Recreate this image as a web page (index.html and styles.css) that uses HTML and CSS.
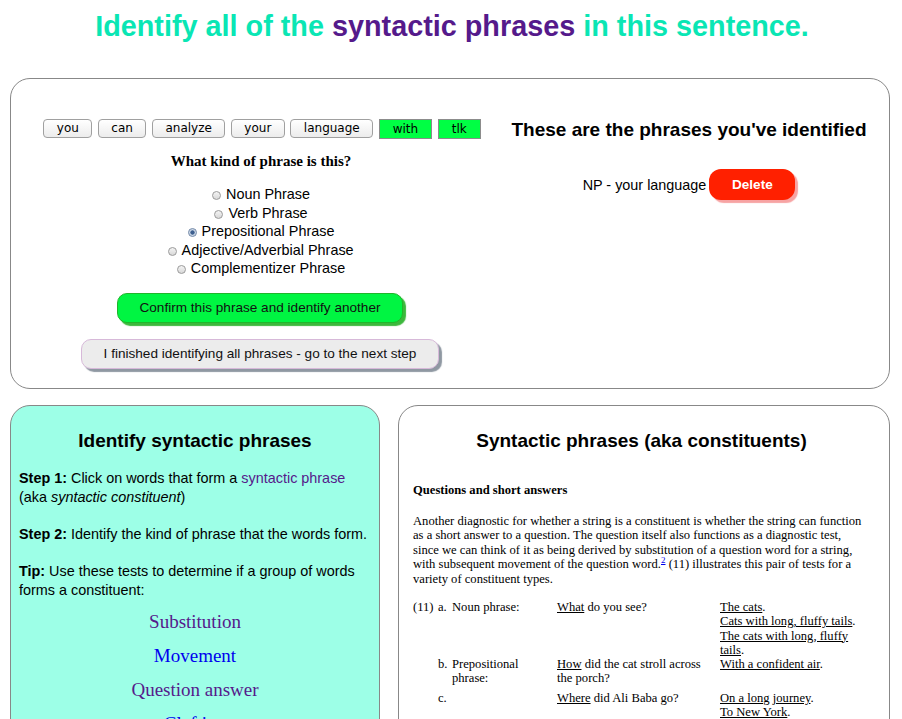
FILE: index.html
```html
<!DOCTYPE html>
<html>
<head>
<meta charset="utf-8">
<link rel="stylesheet" href="styles.css">
</head>
<body>
<div class="page">
  <h1 class="title">Identify all of the <span class="purple">syntactic phrases</span> in this sentence.</h1>

  <section class="top-panel">
    <div class="left-col">
      <div class="words">
        <button class="word">you</button>
        <button class="word">can</button>
        <button class="word">analyze</button>
        <button class="word">your</button>
        <button class="word">language</button>
        <button class="word selected">with</button>
        <button class="word selected">tlk</button>
      </div>
      <h4 class="question">What kind of phrase is this?</h4>
      <div class="radios">
        <label class="radio-line"><input type="radio" name="k"> Noun Phrase</label>
        <label class="radio-line"><input type="radio" name="k"> Verb Phrase</label>
        <label class="radio-line"><input type="radio" name="k" checked> Prepositional Phrase</label>
        <label class="radio-line"><input type="radio" name="k"> Adjective/Adverbial Phrase</label>
        <label class="radio-line"><input type="radio" name="k"> Complementizer Phrase</label>
      </div>
      <button class="confirm">Confirm this phrase and identify another</button>
      <button class="finish">I finished identifying all phrases - go to the next step</button>
    </div>
    <div class="right-col">
      <h3 class="phr-head">These are the phrases you've identified</h3>
      <div class="phrase-row">
        <span class="phrase-text">NP - your language</span>
        <button class="delete">Delete</button>
      </div>
    </div>
  </section>

  <div class="bottom">
    <section class="help">
      <h3 class="panel-head">Identify syntactic phrases</h3>
      <p class="step"><b>Step 1:</b> Click on words that form a <span class="purple">syntactic phrase</span> (aka <i>syntactic constituent</i>)</p>
      <p class="step"><b>Step 2:</b> Identify the kind of phrase that the words form.</p>
      <p class="step"><b>Tip:</b> Use these tests to determine if a group of words forms a constituent:</p>
      <div class="tests">
        <div class="test visited">Substitution</div>
        <div class="test link">Movement</div>
        <div class="test visited">Question answer</div>
        <div class="test link">Clefting</div>
      </div>
    </section>

    <section class="reading">
      <h3 class="panel-head">Syntactic phrases (aka constituents)</h3>
      <h5 class="sub">Questions and short answers</h5>
      <p class="para">Another diagnostic for whether a string is a constituent is whether the string can function as a short answer to a question. The question itself also functions as a diagnostic test, since we can think of it as being derived by substitution of a question word for a string, with subsequent movement of the question word.<sup class="fn">2</sup> (11) illustrates this pair of tests for a variety of constituent types.</p>
      <div class="examples">
        <div class="num">(11)</div>
        <div class="let">a.</div>
        <div class="lab">Noun phrase:</div>
        <div class="q"><u>What</u> do you see?</div>
        <div class="a"><u>The cats</u>.<br><u>Cats with long, fluffy tails</u>.<br><u>The cats with long, fluffy tails</u>.</div>

        <div class="num row-b"></div>
        <div class="let row-b">b.</div>
        <div class="lab row-b">Prepositional phrase:</div>
        <div class="q row-b"><u>How</u> did the cat stroll across the porch?</div>
        <div class="a row-b"><u>With a confident air</u>.</div>

        <div class="num"></div>
        <div class="let">c.</div>
        <div class="lab"></div>
        <div class="q"><u>Where</u> did Ali Baba go?</div>
        <div class="a"><u>On a long journey</u>.<br><u>To New York</u>.</div>
      </div>
    </section>
  </div>
</div>

<svg class="arrow" width="902" height="719" viewBox="0 0 902 719">
  <line x1="576" y1="269" x2="618" y2="221" stroke="#ff0a7a" stroke-width="5"/>
  <polygon points="633,205 607,216 626,232" fill="#ff0a7a"/>
</svg>
</body>
</html>
```

FILE: styles.css
```css
html, body {
  margin: 0;
  padding: 0;
  background: #fff;
}
body {
  position: relative;
  font-family: "Liberation Sans", Arial, sans-serif;
  font-size: 14.4px;
  color: #000;
  overflow: hidden;
  height: 719px;
}
.page {
  margin-left: 10px;
  width: 880px;
}
.title {
  margin: 10px 0 35px;
  padding-left: 4px;
  font-size: 28.8px;
  line-height: 33px;
  font-weight: bold;
  text-align: center;
  color: #0ae6b4;
}
.purple { color: #551a8b; }

.top-panel {
  box-sizing: border-box;
  height: 311px;
  border: 1px solid #888;
  border-radius: 20px;
  display: grid;
  grid-template-columns: 500px 1fr;
}
.left-col {
  display: flex;
  flex-direction: column;
  align-items: center;
  padding-top: 40px;
}
.words {
  display: flex;
  gap: 5.5px;
  height: 20px;
  position: relative;
  left: 1px;
}
.word {
  font-family: "DejaVu Sans", sans-serif;
  font-size: 12px;
  height: 19px;
  padding: 0 12.5px;
  border: 1px solid #a0a0a0;
  border-radius: 4px;
  background: linear-gradient(#ffffff, #ececec);
  color: #000;
  line-height: 17px;
}
.word.selected {
  height: 20px;
  border-radius: 0;
  border: 1px solid #8c8c8c;
  background: #00ff44;
  padding: 0 13px;
}
.question {
  margin: 13px 0 0;
  font-family: "Liberation Serif", "Times New Roman", serif;
  font-size: 15px;
  line-height: 18px;
  font-weight: bold;
}
.radios {
  margin-top: 15px;
  display: flex;
  flex-direction: column;
  align-items: center;
}
.radio-line {
  display: block;
  line-height: 18.5px;
  font-size: 14.4px;
  white-space: nowrap;
}
.radio-line input {
  -webkit-appearance: none;
  appearance: none;
  width: 9px;
  height: 9px;
  margin: 0 1px 0 0;
  border: 1px solid #9a9a9a;
  border-radius: 50%;
  background: linear-gradient(#f4f4f4, #d8d8d8);
  vertical-align: -1px;
  box-sizing: border-box;
}
.radio-line input:checked {
  background: radial-gradient(circle, #3d5f8f 0 1.8px, #b9c8dc 2.4px, #e8eef6 4px);
  border-color: #6f86a6;
}
.confirm {
  margin-top: 15px;
  width: 286px;
  height: 30px;
  font-family: "Liberation Sans", Arial, sans-serif;
  font-size: 13.6px;
  color: #111;
  background: #00f542;
  border: 1px solid #21b52b;
  border-radius: 10px;
  box-shadow: 3px 3px 1px #3cb83c;
  position: relative;
  left: -1px;
}
.finish {
  margin-top: 16px;
  width: 358px;
  height: 30px;
  font-family: "Liberation Sans", Arial, sans-serif;
  font-size: 13.6px;
  color: #111;
  background: #ececec;
  border: 1px solid #d7b9d9;
  border-radius: 10px;
  box-shadow: 3px 3px 1px #8f98a2;
  position: relative;
  left: -1px;
}
.right-col {
  display: flex;
  flex-direction: column;
  align-items: center;
  padding: 40px 22px 0 0;
}
.phr-head {
  margin: 0;
  font-size: 19px;
  line-height: 22px;
  font-weight: bold;
  white-space: nowrap;
}
.phrase-row {
  margin-top: 28px;
  display: flex;
  align-items: center;
  gap: 3px;
}
.phrase-text { font-size: 14.4px; }
.delete {
  width: 86px;
  height: 31px;
  background: #ff2000;
  color: #fff;
  font-family: "Liberation Sans", Arial, sans-serif;
  font-weight: bold;
  font-size: 13.6px;
  border: none;
  border-radius: 12px;
  box-shadow: 3px 3px 1px #f7a3a3;
}

.bottom {
  margin-top: 16px;
  display: grid;
  grid-template-columns: 370px 492px;
  gap: 18px;
}
.help, .reading {
  box-sizing: border-box;
  height: 420px;
  border: 1px solid #888;
  border-radius: 20px;
}
.help {
  background: #9dffe7;
  padding: 24px 8px 0;
}
.panel-head {
  margin: 0;
  font-size: 19px;
  line-height: 22px;
  font-weight: bold;
  text-align: center;
}
.step {
  margin: 16.5px 0 0;
  line-height: 19px;
}
.help .step + .step { margin-top: 18px; }
.tests {
  margin-top: 5.5px;
  font-family: "Liberation Serif", "Times New Roman", serif;
  font-size: 19px;
  text-align: center;
}
.test { line-height: 34px; }
.visited { color: #551a8b; }
.link { color: #0000ee; }

.reading {
  background: #fff;
  padding: 24px 19px 0 14px;
  font-family: "Liberation Serif", "Times New Roman", serif;
  font-size: 12.6px;
}
.reading .panel-head {
  font-family: "Liberation Sans", Arial, sans-serif;
}
.sub {
  margin: 30.5px 0 0;
  font-size: 12.6px;
  line-height: 15px;
  font-weight: bold;
}
.para {
  margin: 16px 0 0;
  line-height: 14.5px;
}
.fn {
  color: #0000ee;
  text-decoration: underline;
  font-size: 9px;
  line-height: 0;
}
.examples {
  margin-top: 14px;
  display: grid;
  grid-template-columns: 25px 14px 105px 163px 145px;
  line-height: 14.3px;
}
.examples .row-b { padding-bottom: 5px; }
.examples .lab { padding-right: 8px; }
.examples .q { padding-right: 6px; }
```
